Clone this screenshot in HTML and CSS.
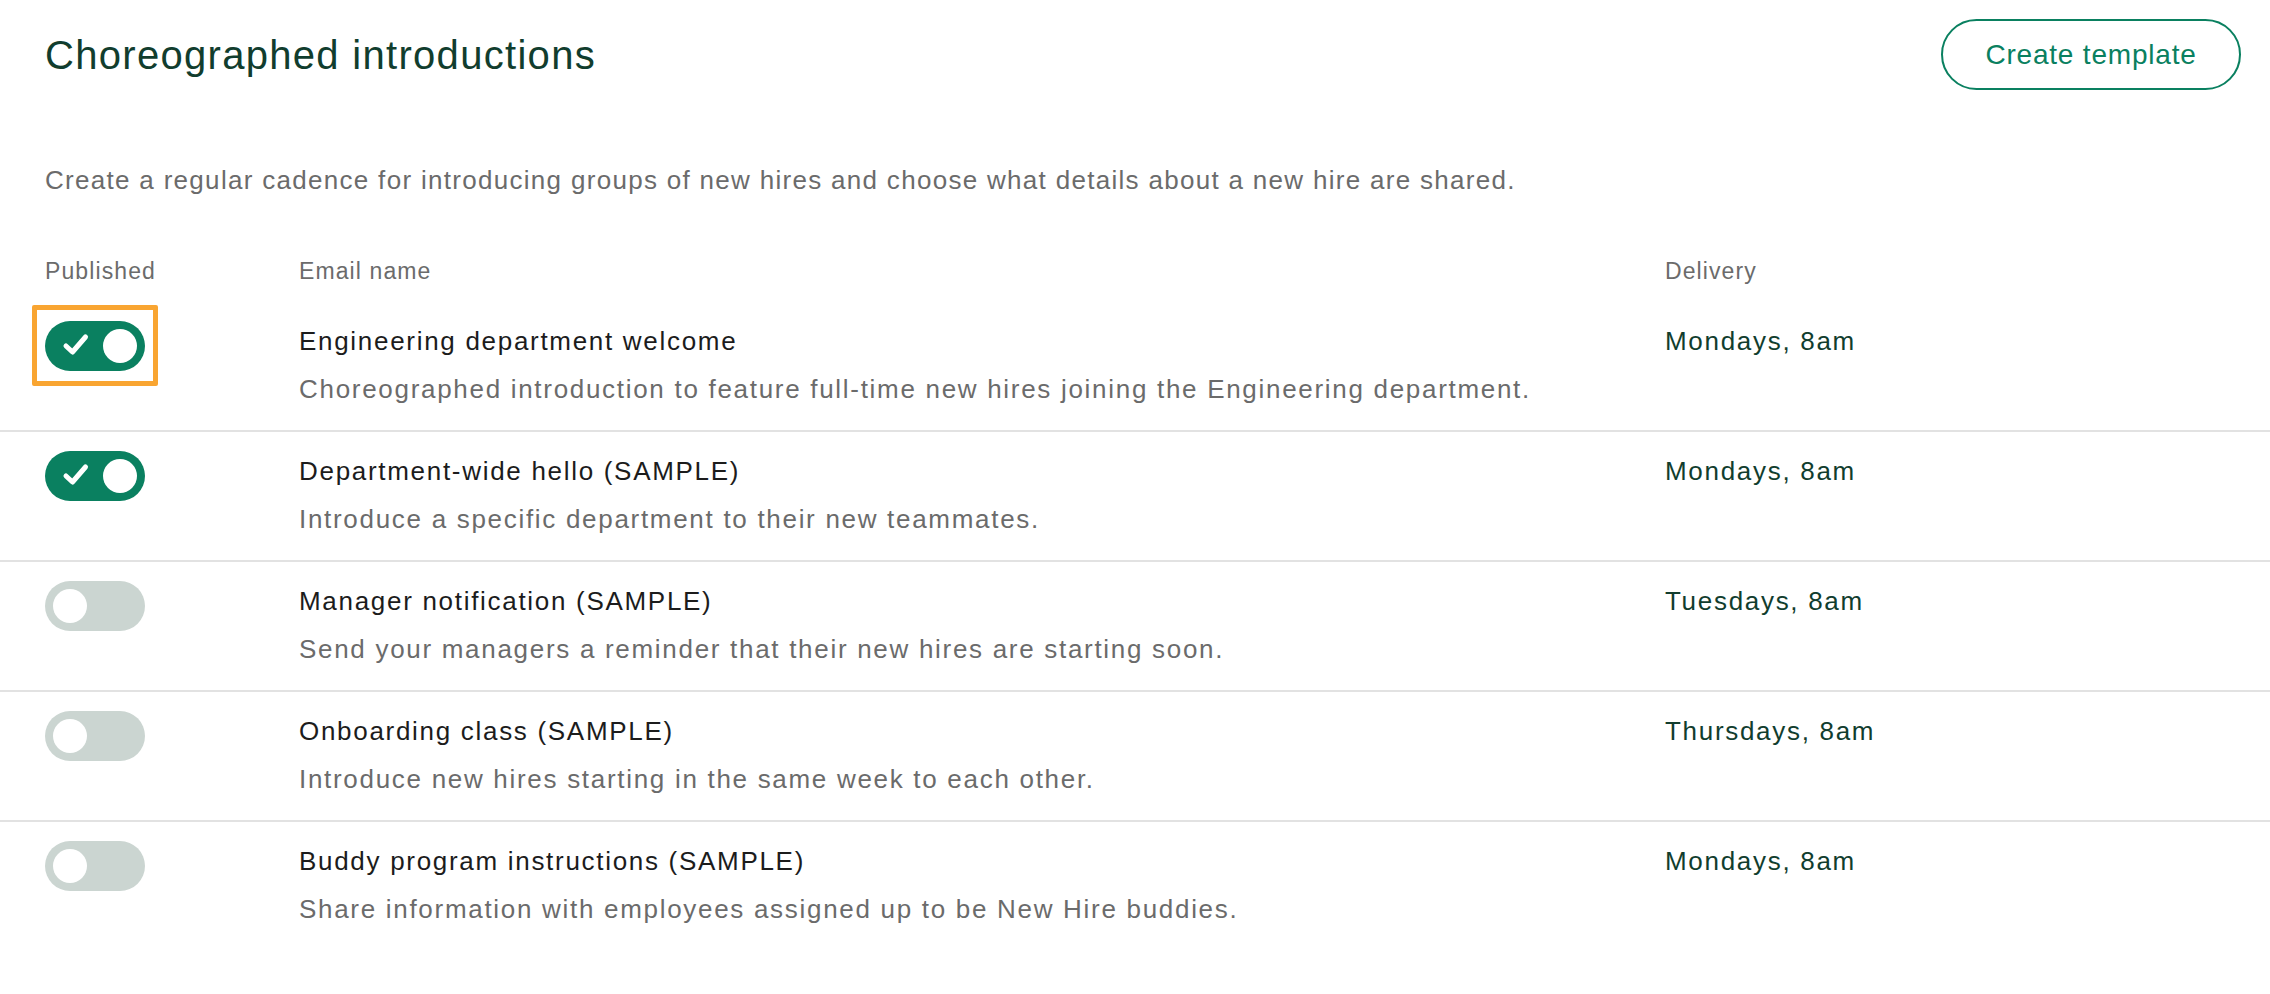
FILE: index.html
```html
<!DOCTYPE html>
<html lang="en">
<head>
  <meta charset="UTF-8">
  <title>Choreographed introductions</title>
  <link rel="stylesheet" href="styles.css">
</head>
<body>
  <div class="page-head">
    <h1>Choreographed introductions</h1>
    <button class="btn-outline">Create template</button>
  </div>

  <p class="intro">Create a regular cadence for introducing groups of new hires and choose what details about a new hire are shared.</p>

  <div class="table">
    <div class="row head">
      <div>Published</div>
      <div>Email name</div>
      <div>Delivery</div>
    </div>

    <div class="row">
      <div>
        <span class="highlight">
          <span class="toggle on">
            <svg class="check" width="28" height="24" viewBox="0 0 28 24"><path d="M4 13 L10.5 19 L23.5 4" fill="none" stroke="#fff" stroke-width="5" stroke-linecap="round" stroke-linejoin="round"/></svg>
            <span class="knob"></span>
          </span>
        </span>
      </div>
      <div>
        <div class="name">Engineering department welcome</div>
        <div class="desc">Choreographed introduction to feature full-time new hires joining the Engineering department.</div>
      </div>
      <div class="delivery">Mondays, 8am</div>
    </div>

    <div class="row">
      <div>
        <span class="toggle on">
          <svg class="check" width="28" height="24" viewBox="0 0 28 24"><path d="M4 13 L10.5 19 L23.5 4" fill="none" stroke="#fff" stroke-width="5" stroke-linecap="round" stroke-linejoin="round"/></svg>
          <span class="knob"></span>
        </span>
      </div>
      <div>
        <div class="name">Department-wide hello (SAMPLE)</div>
        <div class="desc">Introduce a specific department to their new teammates.</div>
      </div>
      <div class="delivery">Mondays, 8am</div>
    </div>

    <div class="row">
      <div><span class="toggle"><span class="knob"></span></span></div>
      <div>
        <div class="name">Manager notification (SAMPLE)</div>
        <div class="desc">Send your managers a reminder that their new hires are starting soon.</div>
      </div>
      <div class="delivery">Tuesdays, 8am</div>
    </div>

    <div class="row">
      <div><span class="toggle"><span class="knob"></span></span></div>
      <div>
        <div class="name">Onboarding class (SAMPLE)</div>
        <div class="desc">Introduce new hires starting in the same week to each other.</div>
      </div>
      <div class="delivery">Thursdays, 8am</div>
    </div>

    <div class="row">
      <div><span class="toggle"><span class="knob"></span></span></div>
      <div>
        <div class="name">Buddy program instructions (SAMPLE)</div>
        <div class="desc">Share information with employees assigned up to be New Hire buddies.</div>
      </div>
      <div class="delivery">Mondays, 8am</div>
    </div>
  </div>
</body>
</html>
```

FILE: styles.css
```css
body {
  margin: 0;
  background: #fff;
  font-family: "Liberation Sans", Arial, sans-serif;
  color: #1c1c1c;
}
.page-head {
  display: flex;
  align-items: center;
  justify-content: space-between;
  padding: 19px 29px 0 45px;
}
h1 {
  margin: 0;
  font-size: 40px;
  line-height: 48px;
  font-weight: normal;
  letter-spacing: 1.3px;
  color: #113d2e;
}
.btn-outline {
  height: 71px;
  width: 300px;
  border: 2px solid #0a8060;
  border-radius: 36px;
  background: #fff;
  color: #0a8060;
  font-family: inherit;
  font-size: 28px;
  letter-spacing: 0.8px;
}
.intro {
  margin: 70px 0 0;
  padding-left: 45px;
  font-size: 26px;
  line-height: 40px;
  letter-spacing: 1.3px;
  color: #6b6b6b;
}
.row {
  display: grid;
  grid-template-columns: 254px 1366px 1fr;
  padding: 19px 0 21px 45px;
  border-bottom: 2px solid #e2e2e2;
  font-size: 26px;
  line-height: 40px;
  letter-spacing: 1.7px;
}
.row:last-child {
  border-bottom: none;
}
.row.head {
  margin-top: 55px;
  padding: 0 0 15px 45px;
  border-bottom: none;
  font-size: 23px;
  line-height: 32px;
  letter-spacing: 1.1px;
  color: #6b6b6b;
}
.name {
  color: #1c1c1c;
}
.desc {
  margin-top: 8px;
  color: #6b6b6b;
}
.delivery {
  color: #113d2e;
}
.toggle {
  position: relative;
  display: flex;
  align-items: center;
  justify-content: flex-start;
  width: 100px;
  height: 50px;
  padding: 0 8px;
  box-sizing: border-box;
  border-radius: 25px;
  background: #cbd5d1;
}
.toggle .knob {
  width: 34px;
  height: 34px;
  border-radius: 50%;
  background: #fff;
}
.toggle.on {
  justify-content: flex-end;
  background: #0a8060;
}
.toggle .check {
  position: absolute;
  left: 17px;
  top: 12px;
}
.highlight {
  display: inline-block;
  margin: -16px 0 0 -13px;
  padding: 11px 8px 10px;
  border: 5px solid #f9a531;
  border-radius: 2px;
}
```
